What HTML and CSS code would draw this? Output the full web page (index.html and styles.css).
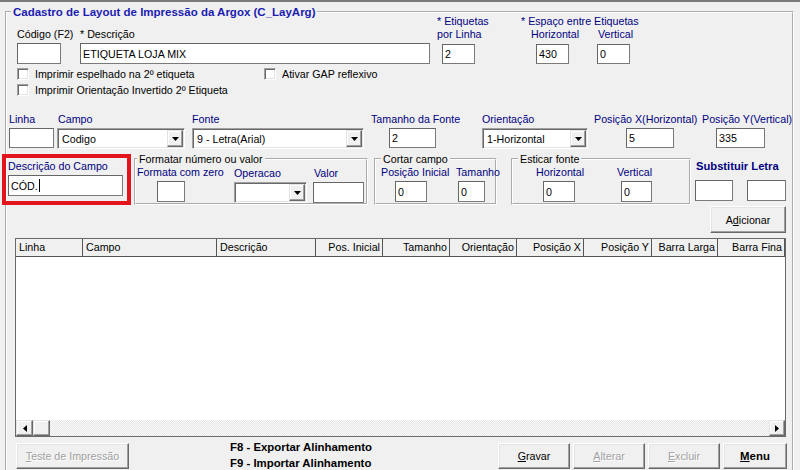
FILE: index.html
```html
<!DOCTYPE html>
<html lang="pt-BR">
<head>
<meta charset="utf-8">
<title>Cadastro de Layout de Impressão da Argox (C_LayArg)</title>
<link rel="stylesheet" href="styles.css">
</head>
<body>
<div class="topbar"></div>
<fieldset class="main">
  <legend class="main-title">Cadastro de Layout de Impressão da Argox (C_LayArg)</legend>

  <div class="row1">
    <div class="col c-codigo">
      <span class="lbl black">Código (F2)</span>
      <span class="field f-codigo"></span>
    </div>
    <div class="col c-desc">
      <span class="lbl black">* Descrição</span>
      <span class="field f-desc">ETIQUETA LOJA MIX</span>
    </div>
    <div class="col c-etiq">
      <span class="lbl">* Etiquetas</span>
      <span class="lbl">por Linha</span>
      <span class="field f-etiq">2</span>
    </div>
    <div class="col c-espaco">
      <span class="lbl">* Espaço entre Etiquetas</span>
      <div class="sub">
        <div class="col c-esp-h">
          <span class="lbl">Horizontal</span>
          <span class="field f-esp-h">430</span>
        </div>
        <div class="col c-esp-v">
          <span class="lbl pad1">Vertical</span>
          <span class="field f-esp-v">0</span>
        </div>
      </div>
    </div>
  </div>

  <div class="checks">
    <div class="check-line">
      <div class="check first"><span class="box"></span><span>Imprimir espelhado na 2º etiqueta</span></div>
      <div class="check"><span class="box"></span><span>Ativar GAP reflexivo</span></div>
    </div>
    <div class="check-line">
      <div class="check"><span class="box"></span><span>Imprimir Orientação Invertido 2º Etiqueta</span></div>
    </div>
  </div>

  <div class="row2">
    <div class="col c-linha">
      <span class="lbl">Linha</span>
      <span class="field f-linha"></span>
    </div>
    <div class="col c-campo">
      <span class="lbl pad1">Campo</span>
      <div class="combo cb-campo"><span class="combo-text">Codigo</span><span class="drop"><svg width="7" height="4" viewBox="0 0 7 4"><polygon points="0,0 7,0 3.5,4" fill="#000"/></svg></span></div>
    </div>
    <div class="col c-fonte">
      <span class="lbl">Fonte</span>
      <div class="combo cb-fonte"><span class="combo-text">9 - Letra(Arial)</span><span class="drop"><svg width="7" height="4" viewBox="0 0 7 4"><polygon points="0,0 7,0 3.5,4" fill="#000"/></svg></span></div>
    </div>
    <div class="col c-tam">
      <span class="lbl">Tamanho da Fonte</span>
      <span class="field f-tam">2</span>
    </div>
    <div class="col c-ori">
      <span class="lbl">Orientação</span>
      <div class="combo cb-ori"><span class="combo-text">1-Horizontal</span><span class="drop"><svg width="7" height="4" viewBox="0 0 7 4"><polygon points="0,0 7,0 3.5,4" fill="#000"/></svg></span></div>
    </div>
    <div class="col c-posx">
      <span class="lbl">Posição X(Horizontal)</span>
      <span class="field f-posx">5</span>
    </div>
    <div class="col c-posy">
      <span class="lbl">Posição Y(Vertical)</span>
      <span class="field f-posy">335</span>
    </div>
  </div>

  <div class="row3">
    <div class="col c-desccampo">
      <span class="lbl">Descrição do Campo</span>
      <span class="field f-desccampo">CÓD.<span class="caret"></span></span>
      <div class="highlight"></div>
    </div>

    <fieldset class="group g-formatar">
      <legend class="group-title">Formatar número ou valor</legend>
      <div class="group-row">
        <div class="col c-fz">
          <span class="lbl">Formata com zero</span>
          <span class="field f-fz"></span>
        </div>
        <div class="col c-op">
          <span class="lbl">Operacao</span>
          <div class="combo cb-op"><span class="combo-text"></span><span class="drop"><svg width="7" height="4" viewBox="0 0 7 4"><polygon points="0,0 7,0 3.5,4" fill="#000"/></svg></span></div>
        </div>
        <div class="col c-valor">
          <span class="lbl pad1">Valor</span>
          <span class="field f-valor"></span>
        </div>
      </div>
    </fieldset>

    <fieldset class="group g-cortar">
      <legend class="group-title">Cortar campo</legend>
      <div class="group-row">
        <div class="col c-pi">
          <span class="lbl">Posição Inicial</span>
          <span class="field f-pi">0</span>
        </div>
        <div class="col c-ct">
          <span class="lbl">Tamanho</span>
          <span class="field f-ct">0</span>
        </div>
      </div>
    </fieldset>

    <fieldset class="group g-esticar">
      <legend class="group-title">Esticar fonte</legend>
      <div class="group-row">
        <div class="col c-eh">
          <span class="lbl">Horizontal</span>
          <span class="field f-eh">0</span>
        </div>
        <div class="col c-ev">
          <span class="lbl">Vertical</span>
          <span class="field f-ev">0</span>
        </div>
      </div>
    </fieldset>

    <div class="col c-subst">
      <span class="lbl bold pad1">Substituir Letra</span>
      <div class="subst-row">
        <span class="field f-s1"></span>
        <span class="field f-s2"></span>
      </div>
    </div>
  </div>

  <div class="row4">
    <button class="btn b-add">A<u>d</u>icionar</button>
  </div>

  <div class="grid">
    <div class="grid-head">
      <span class="th w67 left">Linha</span>
      <span class="th w134 left">Campo</span>
      <span class="th w99 left">Descrição</span>
      <span class="th w67">Pos. Inicial</span>
      <span class="th w67">Tamanho</span>
      <span class="th w67">Orientação</span>
      <span class="th w67">Posição X</span>
      <span class="th w68">Posição Y</span>
      <span class="th w66">Barra Larga</span>
      <span class="th w67">Barra Fina</span>
    </div>
    <div class="grid-body"></div>
    <div class="hscroll">
      <span class="sbtn"><svg width="4" height="7" viewBox="0 0 4 7"><polygon points="4,0 4,7 0,3.5" fill="#000"/></svg></span>
      <span class="sbtn thumb"></span>
      <span class="track"></span>
      <span class="sbtn"><svg width="4" height="7" viewBox="0 0 4 7"><polygon points="0,0 0,7 4,3.5" fill="#000"/></svg></span>
    </div>
  </div>

  <div class="bottom">
    <button class="btn disabled b-teste"><u>T</u>este de Impressão</button>
    <div class="fkeys">
      <div>F8 - Exportar Alinhamento</div>
      <div>F9 - Importar Alinhamento</div>
    </div>
    <div class="actions">
      <button class="btn b-act"><u>G</u>ravar</button>
      <button class="btn b-act disabled"><u>A</u>lterar</button>
      <button class="btn b-act disabled"><u>E</u>xcluir</button>
      <button class="btn b-menu"><u>M</u>enu</button>
    </div>
  </div>
</fieldset>
</body>
</html>
```

FILE: styles.css
```css
* { box-sizing: border-box; }
html, body { margin: 0; padding: 0; }
body {
  width: 800px;
  height: 470px;
  overflow: hidden;
  background: #f0f0f0;
  font-family: "Liberation Sans", Arial, sans-serif;
  font-size: 10.7px;
  color: #000;
}
.topbar { height: 2px; background: #7a7a7a; }

.main {
  margin: 4px 0 0 5px;
  width: 789px;
  height: 468px;
  padding: 0;
  border: 2px groove #fff;
  min-width: 0;
}
.main-title {
  margin-left: 4px;
  padding: 0 2px;
  font-size: 11.5px;
  font-weight: bold;
  line-height: 12px;
  color: #1c1cb0;
}

.col { display: flex; flex-direction: column; flex: none; }
.lbl { display: block; line-height: 13px; color: #000080; white-space: nowrap; }
.lbl.black { color: #000; }
.lbl.bold { font-weight: bold; font-size: 11.2px; }
.pad1 { padding-left: 1px; }

.field {
  display: flex;
  align-items: center;
  background: #fff;
  border: 1px solid #7a7a7a;
  border-top-color: #666;
  border-left-color: #666;
  padding: 0 2px;
  white-space: nowrap;
  overflow: hidden;
  flex: none;
  height: 20px;
  margin-top: 2px;
}

/* Row 1 */
.row1 { display: flex; align-items: flex-end; margin-top: -3px; }
.c-codigo { margin-left: 10px; width: 63px; }
.f-codigo { width: 44px; height: 21px; }
.c-desc { width: 357px; }
.f-desc { width: 350px; height: 21px; }
.c-etiq { width: 84px; }
.f-etiq { width: 33px; margin-left: 5px; margin-top: 3px; }
.sub { display: flex; }
.c-esp-h { margin-left: 10px; width: 66px; }
.f-esp-h { width: 33px; margin-left: 5px; margin-top: 3px; }
.f-esp-v { width: 33px; margin-top: 3px; }

/* Checkboxes */
.checks { margin: 4px 0 0 10px; }
.check-line { display: flex; height: 16px; }
.check { display: flex; align-items: flex-start; gap: 6px; line-height: 12px; white-space: nowrap; }
.check.first { width: 247px; }
.box {
  width: 12px;
  height: 12px;
  background: #fff;
  border: 1px solid;
  border-color: #a0a0a0 #fff #fff #a0a0a0;
  box-shadow: inset 1px 1px #696969, inset -1px -1px #e3e3e3;
  flex: none;
}

/* Combos */
.combo {
  display: flex;
  height: 21px;
  margin-top: 2px;
  background: #fff;
  border: 1px solid;
  border-color: #a0a0a0 #fff #fff #a0a0a0;
  box-shadow: inset 1px 1px #696969, inset -1px -1px #e3e3e3;
  padding: 1px;
  flex: none;
}
.combo-text { flex: 1; display: flex; align-items: center; padding-left: 3px; white-space: nowrap; overflow: hidden; }
.drop {
  width: 16px;
  flex: none;
  display: flex;
  align-items: center;
  justify-content: center;
  background: #f0f0f0;
  border: 1px solid;
  border-color: #e3e3e3 #696969 #696969 #e3e3e3;
  box-shadow: inset -1px -1px #a0a0a0, inset 1px 1px #fff;
}

/* Row 2 */
.row2 { display: flex; margin-top: 13px; }
.c-linha { margin-left: 2px; width: 48px; }
.f-linha { width: 45px; }
.c-campo { width: 135px; }
.cb-campo { width: 128px; }
.c-fonte { width: 179px; }
.cb-fonte { width: 172px; }
.c-tam { width: 111px; }
.f-tam { width: 47px; margin-left: 18px; }
.c-ori { width: 112px; }
.cb-ori { width: 106px; }
.c-posx { width: 108px; }
.f-posx { width: 48px; margin-left: 32px; }
.c-posy { width: 90px; }
.f-posy { width: 49px; margin-left: 14px; }

/* Row 3 */
.row3 { display: flex; align-items: flex-start; margin-top: 4px; }
.c-desccampo { position: relative; margin: 7px 0 0 1px; width: 115px; }
.f-desccampo { width: 115px; height: 21px; }
.caret { display: inline-block; width: 1px; height: 13px; background: #000; margin-left: 1px; }
.highlight {
  position: absolute;
  top: -6px;
  left: -6px;
  right: -8px;
  bottom: -9px;
  border: 4px solid #e3141c;
  pointer-events: none;
}

.group {
  height: 52px;
  margin: 0;
  padding: 0;
  border: 2px groove #fff;
  min-width: 0;
  flex: none;
}
.group-title { padding: 0 2px; line-height: 12px; color: #000; white-space: nowrap; }
.group-row { display: flex; align-items: flex-start; }

.g-formatar { margin-left: 11px; width: 234px; padding-left: 1px; }
.g-formatar .group-title { margin-left: 0; }
.c-fz { margin-top: 1px; width: 97px; }
.f-fz { width: 28px; height: 21px; margin-left: 20px; }
.c-op { margin-top: 2px; width: 79px; }
.cb-op { width: 73px; }
.c-valor { margin-top: 2px; }
.f-valor { width: 51px; height: 21px; }

.g-cortar { margin-left: 6px; width: 123px; }
.g-cortar .group-title { margin-left: 5px; }
.c-pi { margin: 1px 0 0 5px; width: 75px; }
.f-pi { width: 32px; height: 21px; margin-left: 14px; }
.c-ct { margin-top: 1px; }
.f-ct { width: 27px; height: 21px; margin-left: 2px; }

.g-esticar { margin-left: 14px; width: 180px; }
.g-esticar .group-title { margin-left: 5px; }
.c-eh { margin: 1px 0 0 23px; width: 81px; }
.f-eh { width: 32px; height: 21px; margin-left: 7px; }
.c-ev { margin-top: 1px; }
.f-ev { width: 31px; height: 21px; margin-left: 4px; }

.c-subst { margin: 7px 0 0 4px; }
.subst-row { display: flex; margin-top: 5px; }
.f-s1 { width: 38px; height: 21px; }
.f-s2 { width: 39px; height: 21px; margin-left: 14px; }

/* Buttons */
.btn {
  font-family: "Liberation Sans", Arial, sans-serif;
  font-size: 10.7px;
  color: #000;
  background: #f0f0f0;
  border: 1px solid;
  border-color: #fff #696969 #696969 #fff;
  box-shadow: inset -1px -1px #a0a0a0, inset 1px 1px #e3e3e3;
  padding: 0;
  margin: 0;
  flex: none;
  white-space: nowrap;
}
.btn u { text-decoration: underline; }
.btn.disabled { color: #a0a0a0; text-shadow: 1px 1px 0 #fff; }

.row4 { display: flex; justify-content: flex-end; margin-top: 1px; padding-right: 6px; }
.b-add { width: 76px; height: 27px; }

/* Grid */
.grid {
  margin: 5px 0 0 8px;
  width: 771px;
  height: 199px;
  border: 1px solid #696969;
  background: #fff;
  display: flex;
  flex-direction: column;
}
.grid-head { display: flex; height: 18px; background: #f0f0f0; border-bottom: 1px solid #555; flex: none; }
.th {
  flex: none;
  border-right: 1px solid #555;
  line-height: 17px;
  text-align: right;
  padding: 0 2px 0 3px;
  white-space: nowrap;
  overflow: hidden;
}
.th.left { text-align: left; }
.w66 { width: 66px; }
.w67 { width: 67px; }
.w68 { width: 68px; }
.w99 { width: 99px; }
.w134 { width: 134px; }
.grid-body { flex: 1; }
.hscroll { display: flex; height: 16px; flex: none; }
.sbtn {
  width: 17px;
  flex: none;
  display: flex;
  align-items: center;
  justify-content: center;
  background: #f0f0f0;
  border: 1px solid;
  border-color: #e3e3e3 #696969 #696969 #e3e3e3;
  box-shadow: inset -1px -1px #a0a0a0, inset 1px 1px #fff;
}
.sbtn:last-child { width: 16px; }
.track {
  flex: 1;
  background: repeating-conic-gradient(#e6e6e6 0 25%, #fbfbfb 0 50%) 0 0 / 2px 2px;
}

/* Bottom */
.bottom { display: flex; align-items: flex-start; margin-top: 6px; }
.b-teste { width: 113px; height: 26px; margin-left: 9px; }
.fkeys {
  margin: -4px 0 0 101px;
  font-weight: bold;
  font-size: 11.4px;
  line-height: 16px;
  white-space: nowrap;
}
.actions { display: flex; gap: 3px; margin-left: auto; margin-right: 5px; }
.b-act { width: 72px; height: 26px; }
.b-menu { width: 64px; height: 26px; font-weight: bold; font-size: 11.4px; }
```
